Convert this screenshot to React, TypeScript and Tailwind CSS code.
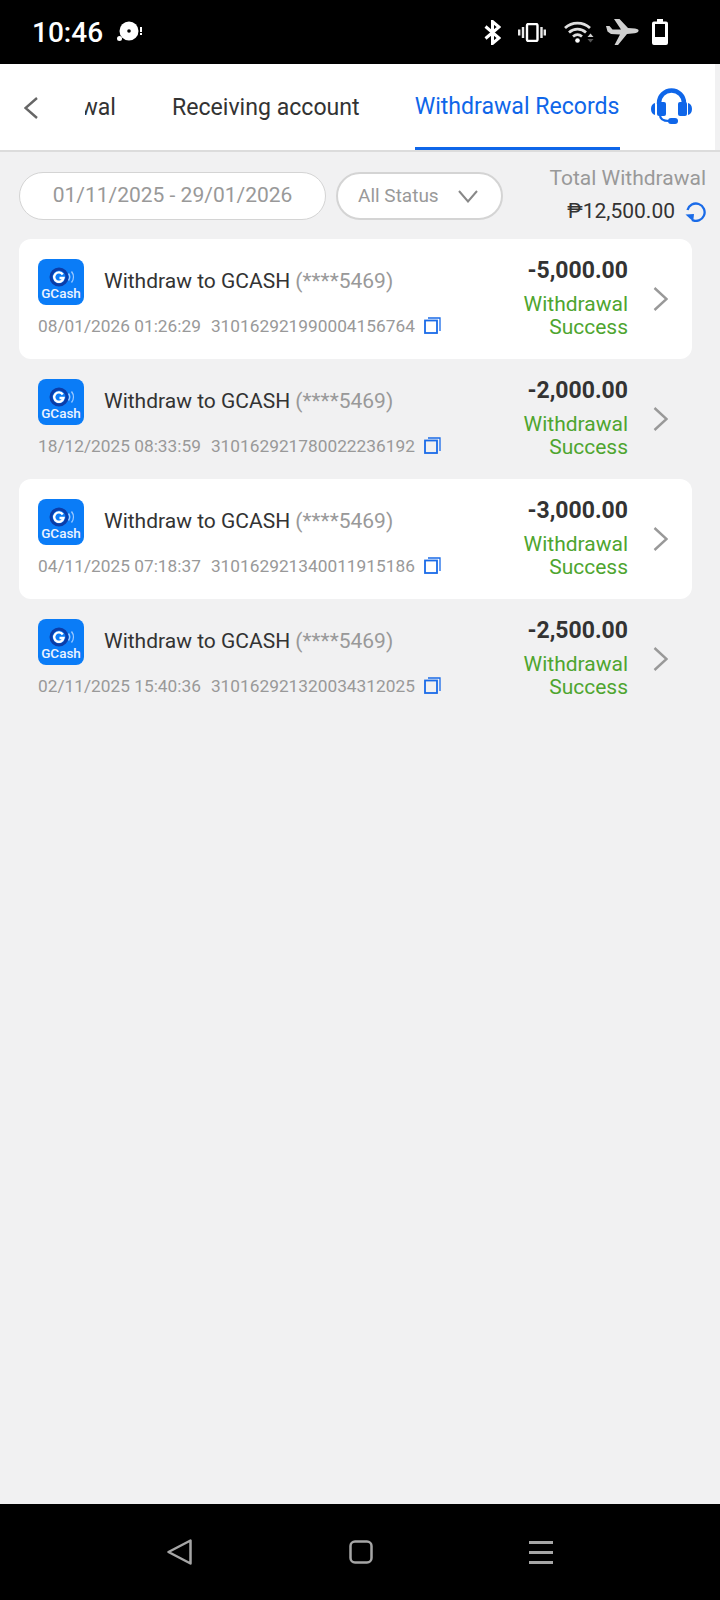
const records = [
  { amount: '-5,000.00', time: '08/01/2026 01:26:29', id: '310162921990004156764' },
  { amount: '-2,000.00', time: '18/12/2025 08:33:59', id: '310162921780022236192' },
  { amount: '-3,000.00', time: '04/11/2025 07:18:37', id: '310162921340011915186' },
  { amount: '-2,500.00', time: '02/11/2025 15:40:36', id: '310162921320034312025' },
];

function StatusIcons() {
  return (
    <div className="flex items-center pr-[52px]">
      {/* bluetooth */}
      <svg width="17" height="25" viewBox="0 0 17 25" fill="none" stroke="white" strokeWidth="3" className="mr-[17px]">
        <path d="M1.500 6.500 15 18 8.500 23.500V1.500L15 7 1.500 18.500" />
      </svg>
      {/* vibrate */}
      <svg width="28" height="19" viewBox="0 0 28 19" fill="none" stroke="#e8e8e8" strokeWidth="2.400" className="mr-[18px]">
        <rect x="9" y="1" width="10.500" height="17" rx="1.500" stroke="white" />
        <path d="M5 4v11M1.200 6.500v6M23.500 4v11M26.800 6.500v6" />
      </svg>
      {/* wifi */}
      <svg width="30" height="22" viewBox="0 0 30 22" fill="none" stroke="#dedede" strokeWidth="2.800" className="mr-[12px]">
        <path d="M1 7C8 .5 19 .5 26 7" />
        <path d="M5 11.500C10 7 17 7 22 11.500" />
        <path d="M9 15.500C12 13 15 13 18 15.500" />
        <circle cx="13.500" cy="19.500" r="2.300" fill="white" stroke="none" />
        <path d="M23.500 16h6l-3-3.500z" fill="#cfcfcf" stroke="none" />
        <path d="M23.500 18h6l-3 3.500z" fill="#555" stroke="none" />
      </svg>
      {/* airplane */}
      <svg width="33" height="26" viewBox="0 0 33 26" fill="#d0d0d0" className="mr-[13px]">
        <path d="M0 7h3.500l3 3.500H15L8 0h5.500L22 9l7 .5c3 .3 4 1.500 3.500 2.500-.5 1.500-2 2-4 2.200L21 15 12 26H8.500L14 15.500 5 15 1.500 12.500z" />
      </svg>
      {/* battery */}
      <svg width="16" height="26" viewBox="0 0 16 26">
        <path d="M5 0h6v2.500h3a2 2 0 0 1 2 2V24a2 2 0 0 1-2 2H2a2 2 0 0 1-2-2V4.500a2 2 0 0 1 2-2h3z" fill="white" />
        <rect x="3" y="5" width="10" height="13" fill="black" />
      </svg>
    </div>
  );
}

function GcashLogo() {
  return (
    <div className="w-[46px] h-[46px] rounded-[8px] bg-[#0a7cf7] flex flex-col items-center shrink-0">
      <svg width="26" height="21" viewBox="0 0 26 21" fill="none" className="mt-[8px] ml-[2px]">
        <circle cx="10" cy="10" r="8" stroke="#0b3da8" strokeWidth="3" />
        <path d="M13.800 7.500A4.700 4.700 0 1 0 14.500 11H10.500" stroke="white" strokeWidth="2.400" />
        <path d="M19.500 6.500a6 6 0 0 1 0 7M22.500 4.500a9 9 0 0 1 0 11" stroke="#9cc9ff" strokeWidth="1.400" />
      </svg>
      <span className="text-[13.500px] leading-[14px] font-medium text-[#eaf3ff] -mt-[2px]">GCash</span>
    </div>
  );
}

function CopyIcon() {
  return (
    <svg width="17" height="17" viewBox="0 0 17 17" fill="none" stroke="#1a6be8" strokeWidth="1.800" className="ml-[9px]">
      <rect x="1" y="3.500" width="12" height="12.500" />
      <path d="M4 1h12v13" strokeWidth="1.300" />
    </svg>
  );
}

function RefreshIcon() {
  return (
    <svg width="21" height="20" viewBox="0 0 21 20" fill="none" stroke="#1a6be8" strokeWidth="2.300" className="ml-[10px]">
      <path d="M2.500 8A8.700 8.700 0 1 1 7 18" />
      <path d="M.5 12.500 9 12l-.8 7.500z" fill="#1a6be8" stroke="none" />
    </svg>
  );
}

function HeadsetIcon() {
  return (
    <svg width="41" height="36" viewBox="0 0 41 36" fill="#0f66e9">
      <path d="M8 16v-1a12.500 12.500 0 0 1 25 0v1" fill="none" stroke="#0f66e9" strokeWidth="4.400" />
      <rect x="6" y="14" width="9" height="14" rx="2" />
      <rect x="27" y="14" width="9" height="14" rx="2" />
      <path d="M4 15v12C1.500 26.500 0 24 0 21s1.500-5.500 4-6zM37 15v12c2.500-.5 4-3 4-6s-1.500-5.500-4-6z" />
      <path d="M9 27c0 4 3.500 6 9 6" fill="none" stroke="#0f66e9" strokeWidth="2.200" />
      <rect x="17" y="30" width="10" height="6" rx="3" />
    </svg>
  );
}

export default function App() {
  return (
    <div className="w-[720px] h-[1600px] flex flex-col bg-[#f1f1f2] font-['Roboto',sans-serif] overflow-hidden">
      <div className="h-[64px] bg-black flex items-center justify-between shrink-0">
        <div className="flex items-center pl-[32px] pt-[2px]">
          <span className="text-white text-[28px] font-medium">10:46</span>
          <svg width="26" height="24" viewBox="0 0 26 24" className="ml-[14px]">
            <circle cx="12" cy="10" r="9.500" fill="white" />
            <circle cx="12" cy="10" r="1.800" fill="black" />
            <circle cx="2.500" cy="17.500" r="2.500" fill="white" />
            <rect x="23" y="6" width="2" height="5" fill="white" />
            <rect x="23" y="12" width="2" height="2" fill="white" />
          </svg>
        </div>
        <StatusIcons />
      </div>

      <div className="h-[88px] shrink-0 flex border-b-2 border-[#dcdcdc]">
        <div className="w-[715px] bg-white flex items-center">
          <svg width="14" height="22" viewBox="0 0 14 22" fill="none" stroke="#666" strokeWidth="2.400" className="ml-[24px] mt-[2px]">
            <path d="M13 1 1.500 11 13 21" />
          </svg>
          <div className="w-[31px] ml-[47px] mt-[2px] overflow-hidden flex justify-end">
            <span className="text-[23.100px] text-[#333] whitespace-nowrap">wal</span>
          </div>
          <span className="text-[23.100px] text-[#333] ml-[56px] mt-[2px] whitespace-nowrap">Receiving account</span>
          <div className="ml-[55px] self-stretch flex items-center pt-[3px] border-b-[3px] border-[#0f66e9] h-[86px]">
            <span className="text-[23.100px] text-[#0f66e9] whitespace-nowrap">Withdrawal Records</span>
          </div>
          <div className="ml-[31px] -mt-[2px]">
            <HeadsetIcon />
          </div>
        </div>
      </div>

      <div className="flex items-start pl-[19px] pr-[14px] pt-[20px] h-[87px] shrink-0">
        <div className="w-[307px] h-[48px] rounded-full bg-white border-[1.500px] border-[#d4d4d4] flex items-center justify-center text-[21px] text-[#999]">
          01/11/2025 - 29/01/2026
        </div>
        <div className="w-[167px] h-[48px] ml-[10px] rounded-full bg-white border-2 border-[#d4d4d4] flex items-center text-[19px] text-[#999] pl-[20px]">
          All Status
          <svg width="20" height="13" viewBox="0 0 20 13" fill="none" stroke="#888" strokeWidth="2" className="ml-[19px]">
            <path d="M1 1 10 11.500 19 1" />
          </svg>
        </div>
        <div className="flex-1 flex flex-col items-end -mt-[10px]">
          <span className="text-[21px] leading-[32px] text-[#999] whitespace-nowrap">Total Withdrawal</span>
          <div className="flex items-center text-[21px] leading-[35px] text-[#333] whitespace-nowrap">
            ₱12,500.00
            <RefreshIcon />
          </div>
        </div>
      </div>

      <div className="flex flex-col pl-[19px] w-[692px]">
        {records.map((r, i) => (
          <div key={r.id} className={`h-[120px] rounded-[12px] pl-[19px] pr-[24px] flex items-center ${i % 2 === 0 ? 'bg-white' : ''}`}>
            <div className="flex-1 flex flex-col -mt-[2px]">
              <div className="flex items-center">
                <GcashLogo />
                <span className="ml-[20px] text-[21px] text-[#333] whitespace-nowrap">
                  Withdraw to GCASH <span className="text-[#999]">(****5469)</span>
                </span>
              </div>
              <div className="flex items-center mt-[9px] text-[17.300px] leading-[24px] text-[#999] whitespace-nowrap">
                <span>{r.time}</span>
                <span className="ml-[10px]">{r.id}</span>
                <CopyIcon />
              </div>
            </div>
            <div className="w-[110px] flex flex-col items-end text-right mb-[3px]">
              <span className="text-[23px] leading-[30px] font-bold text-[#333] whitespace-nowrap">{r.amount}</span>
              <span className="text-[21px] leading-[23px] text-[#4ea52f] mt-[7px]">Withdrawal Success</span>
            </div>
            <svg width="15" height="24" viewBox="0 0 15 24" fill="none" stroke="#999" strokeWidth="2.400" className="ml-[25px] shrink-0">
              <path d="M1.500 1 13.500 12 1.500 23" />
            </svg>
          </div>
        ))}
      </div>

      <div className="mt-auto h-[96px] bg-black flex items-start pt-[35px] justify-center shrink-0">
        <svg width="25" height="26" viewBox="0 0 25 26" fill="none" stroke="#a6a6a6" strokeWidth="2.500" strokeLinejoin="round" className="mr-[157px]">
          <path d="M1.500 13 23.500 1.500v23z" />
        </svg>
        <svg width="24" height="24" viewBox="0 0 24 24" fill="none" stroke="#a6a6a6" strokeWidth="2.500" className="mr-[156px] mt-[1px]">
          <rect x="1.500" y="1.500" width="21" height="21" rx="4.500" />
        </svg>
        <svg width="24" height="23" viewBox="0 0 24 23" fill="#a6a6a6" className="mt-[2px]">
          <rect width="24" height="3" />
          <rect y="10" width="24" height="3" />
          <rect y="20" width="24" height="3" />
        </svg>
      </div>
    </div>
  );
}
